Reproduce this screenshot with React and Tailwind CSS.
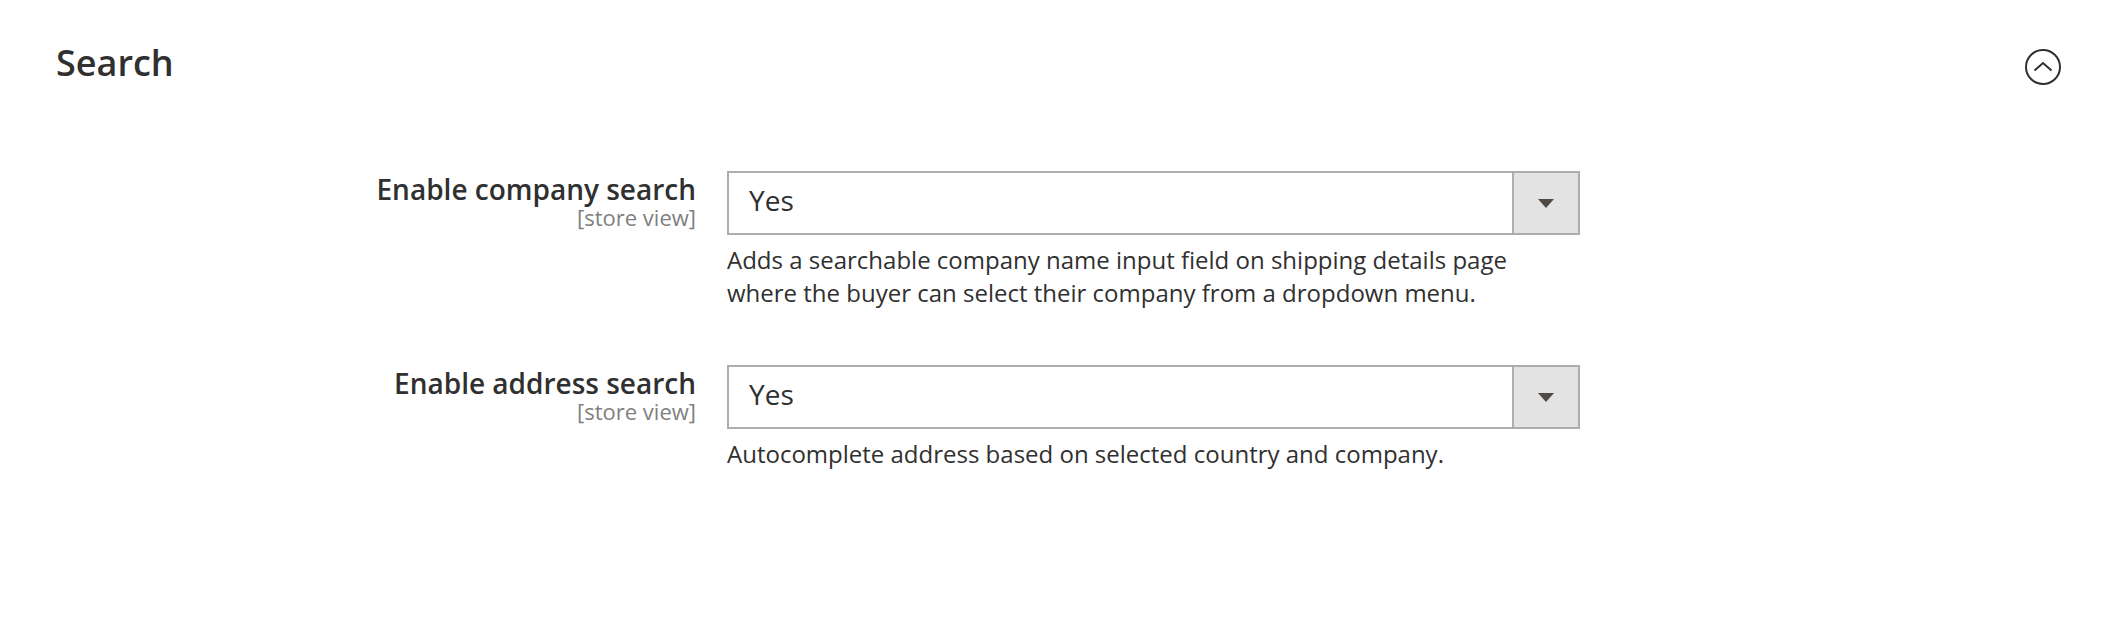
import React from "react";

function Select({ value }) {
  return (
    <div className="flex h-[64px] w-[853px] border-2 border-[#adadad] bg-white">
      <div className="flex flex-1 items-center pb-[6px] pl-[20px] text-[28px] leading-[38px] text-[#303030]">
        {value}
      </div>
      <div className="flex w-[66px] items-center justify-center border-l-2 border-[#adadad] bg-[#e3e3e3]">
        <svg width="16" height="9" viewBox="0 0 16 9">
          <polygon points="0,0 16,0 8,9" fill="#514943" />
        </svg>
      </div>
    </div>
  );
}

function Row({ label, note, className }) {
  return (
    <div className={"flex " + className}>
      <div className="w-[696px] text-right">
        <div className="text-[28px] leading-[36px] font-semibold text-[#303030]">{label}</div>
        <div className="text-[22px] leading-[20px] text-[#808080]">[store view]</div>
      </div>
      <div className="ml-[31px] w-[853px]">
        <Select value="Yes" />
        <div className="mt-[9px] text-[24px] leading-[32.6px] text-[#303030]">{note}</div>
      </div>
    </div>
  );
}

export default function App() {
  return (
    <div className="h-[628px] w-[2108px] bg-white font-['Open_Sans',sans-serif] text-[#303030]">
      <div className="flex items-start justify-between pl-[56px] pr-[47px] pt-[43px]">
        <h2 className="text-[36px] leading-[40px] font-semibold text-[#303030]">Search</h2>
        <svg className="mt-[6px]" width="36" height="36" viewBox="0 0 36 36" fill="none">
          <circle cx="18" cy="18" r="17" stroke="#303030" strokeWidth="2" />
          <path d="M9.5 21.5 L18 14 L26.5 21.5" stroke="#303030" strokeWidth="2" />
        </svg>
      </div>
      <Row
        className="mt-[86px]"
        label="Enable company search"
        note={
          <>
            Adds a searchable company name input field on shipping details page
            <br />
            where the buyer can select their company from a dropdown menu.
          </>
        }
      />
      <Row
        className="mt-[56px]"
        label="Enable address search"
        note="Autocomplete address based on selected country and company."
      />
    </div>
  );
}
